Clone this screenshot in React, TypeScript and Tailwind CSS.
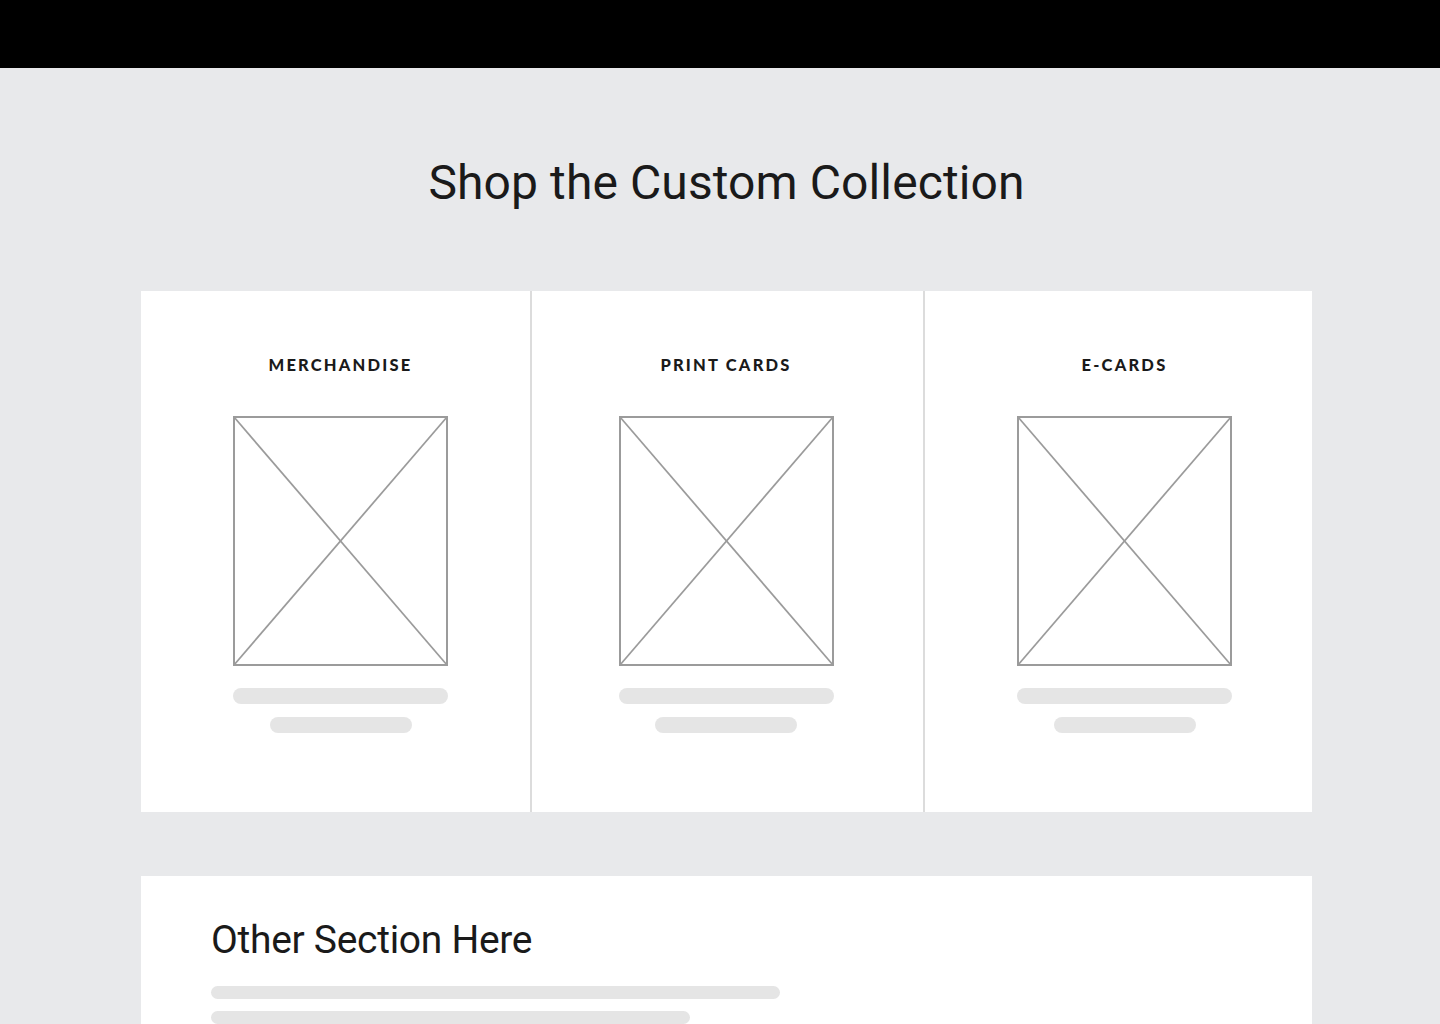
import React from 'react';

const categories = [
  { label: 'MERCHANDISE', shift: 'pl-[10px]' },
  { label: 'PRINT CARDS', shift: 'pr-[3px]' },
  { label: 'E-CARDS', shift: 'pl-[12px]' },
];

function Placeholder() {
  return (
    <svg width="215" height="250" viewBox="0 0 215 250" className="block">
      <rect x="1" y="1" width="213" height="248" fill="#fff" stroke="#9b9b9b" strokeWidth="2" />
      <line x1="1" y1="1" x2="214" y2="249" stroke="#9b9b9b" strokeWidth="1.75" />
      <line x1="214" y1="1" x2="1" y2="249" stroke="#9b9b9b" strokeWidth="1.75" />
    </svg>
  );
}

export default function App() {
  return (
    <div className="min-h-[1024px] bg-[#e8e9eb] font-['Roboto',sans-serif]">
      {/* Top bar */}
      <div className="h-[68px] bg-black" />

      <main className="w-[1171px] ml-[141px]">
        <h1 className="pt-[91px] text-center text-[48px] leading-[48px] font-normal text-[#1a1a1a] tracking-[0.1px]">
          Shop the Custom Collection
        </h1>

        {/* Collection cards */}
        <div className="mt-[84px] flex gap-[2px] bg-[#dcdcdc]">
          {categories.map((c, i) => (
            <div
              key={c.label}
              className={`bg-white flex flex-col items-center pt-[64px] pb-[79px] ${c.shift} ${
                i === 0 ? 'w-[389px]' : i === 1 ? 'w-[391px]' : 'w-[387px]'
              }`}
            >
              <h3 className="font-['Lato',sans-serif] font-black text-[16.5px] leading-[20px] tracking-[2.2px] text-[#1a1a1a]">
                {c.label}
              </h3>
              <div className="mt-[41px]">
                <Placeholder />
              </div>
              <div className="mt-[22px] w-[215px] h-[16px] rounded-full bg-[#e5e5e5]" />
              <div className="mt-[13px] w-[142px] h-[16px] rounded-full bg-[#e5e5e5]" />
            </div>
          ))}
        </div>

        {/* Other section */}
        <section className="mt-[64px] bg-white px-[70px] pt-[44px] pb-[40px]">
          <h2 className="text-[39px] leading-[40px] font-normal text-[#1a1a1a] tracking-[-0.3px]">
            Other Section Here
          </h2>
          <div className="mt-[26px] w-[569px] h-[13px] rounded-full bg-[#e5e5e5]" />
          <div className="mt-[12px] w-[479px] h-[13px] rounded-full bg-[#e5e5e5]" />
          <div className="mt-[12px] w-[520px] h-[13px] rounded-full bg-[#e5e5e5]" />
        </section>
      </main>
    </div>
  );
}
